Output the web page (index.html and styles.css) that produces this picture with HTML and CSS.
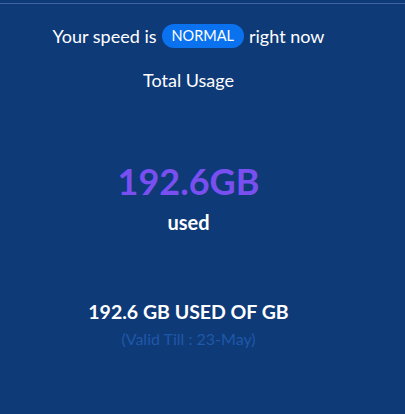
FILE: index.html
```html
<!DOCTYPE html>
<html>
<head>
<meta charset="utf-8">
<link rel="stylesheet" href="styles.css">
</head>
<body>
<div class="topline"></div>
<main class="panel">
  <p class="speed">Your speed is <span class="pill">NORMAL</span> right now</p>
  <p class="title">Total Usage</p>
  <div class="amount">192.6GB</div>
  <div class="used">used</div>
  <div class="summary">192.6 GB USED OF GB</div>
  <div class="valid">(Valid Till : 23-May)</div>
</main>
</body>
</html>
```
FILE: styles.css
```css
html, body {
  margin: 0;
  padding: 0;
  height: 100%;
  background: #0f3a78;
  font-family: Lato, "Noto Sans", sans-serif;
  color: #ffffff;
}
.topline {
  height: 3px;
  border-bottom: 1px solid #3e64a2;
}
.panel {
  width: 377px;
  display: flex;
  flex-direction: column;
  align-items: center;
  text-align: center;
}
.speed {
  margin: 20px 0 0;
  font-size: 18px;
  line-height: 24px;
  display: flex;
  align-items: center;
  gap: 5px;
}
.pill {
  display: inline-block;
  background: #0a72ee;
  color: #fff;
  font-size: 14.5px;
  line-height: 24px;
  padding: 0 10px;
  border-radius: 12px;
}
.title {
  margin: 21px 0 0;
  font-size: 18px;
  line-height: 22px;
}
.amount {
  margin-top: 68px;
  font-size: 36px;
  font-weight: 700;
  line-height: 44px;
  color: #7a4ff2;
}
.used {
  margin-top: 7px;
  font-size: 20px;
  font-weight: 700;
  line-height: 24px;
}
.summary {
  margin-top: 66px;
  font-size: 19.5px;
  font-weight: 700;
  line-height: 24px;
}
.valid {
  margin-top: 5px;
  font-size: 16px;
  line-height: 20px;
  color: #1e58a8;
}
```
